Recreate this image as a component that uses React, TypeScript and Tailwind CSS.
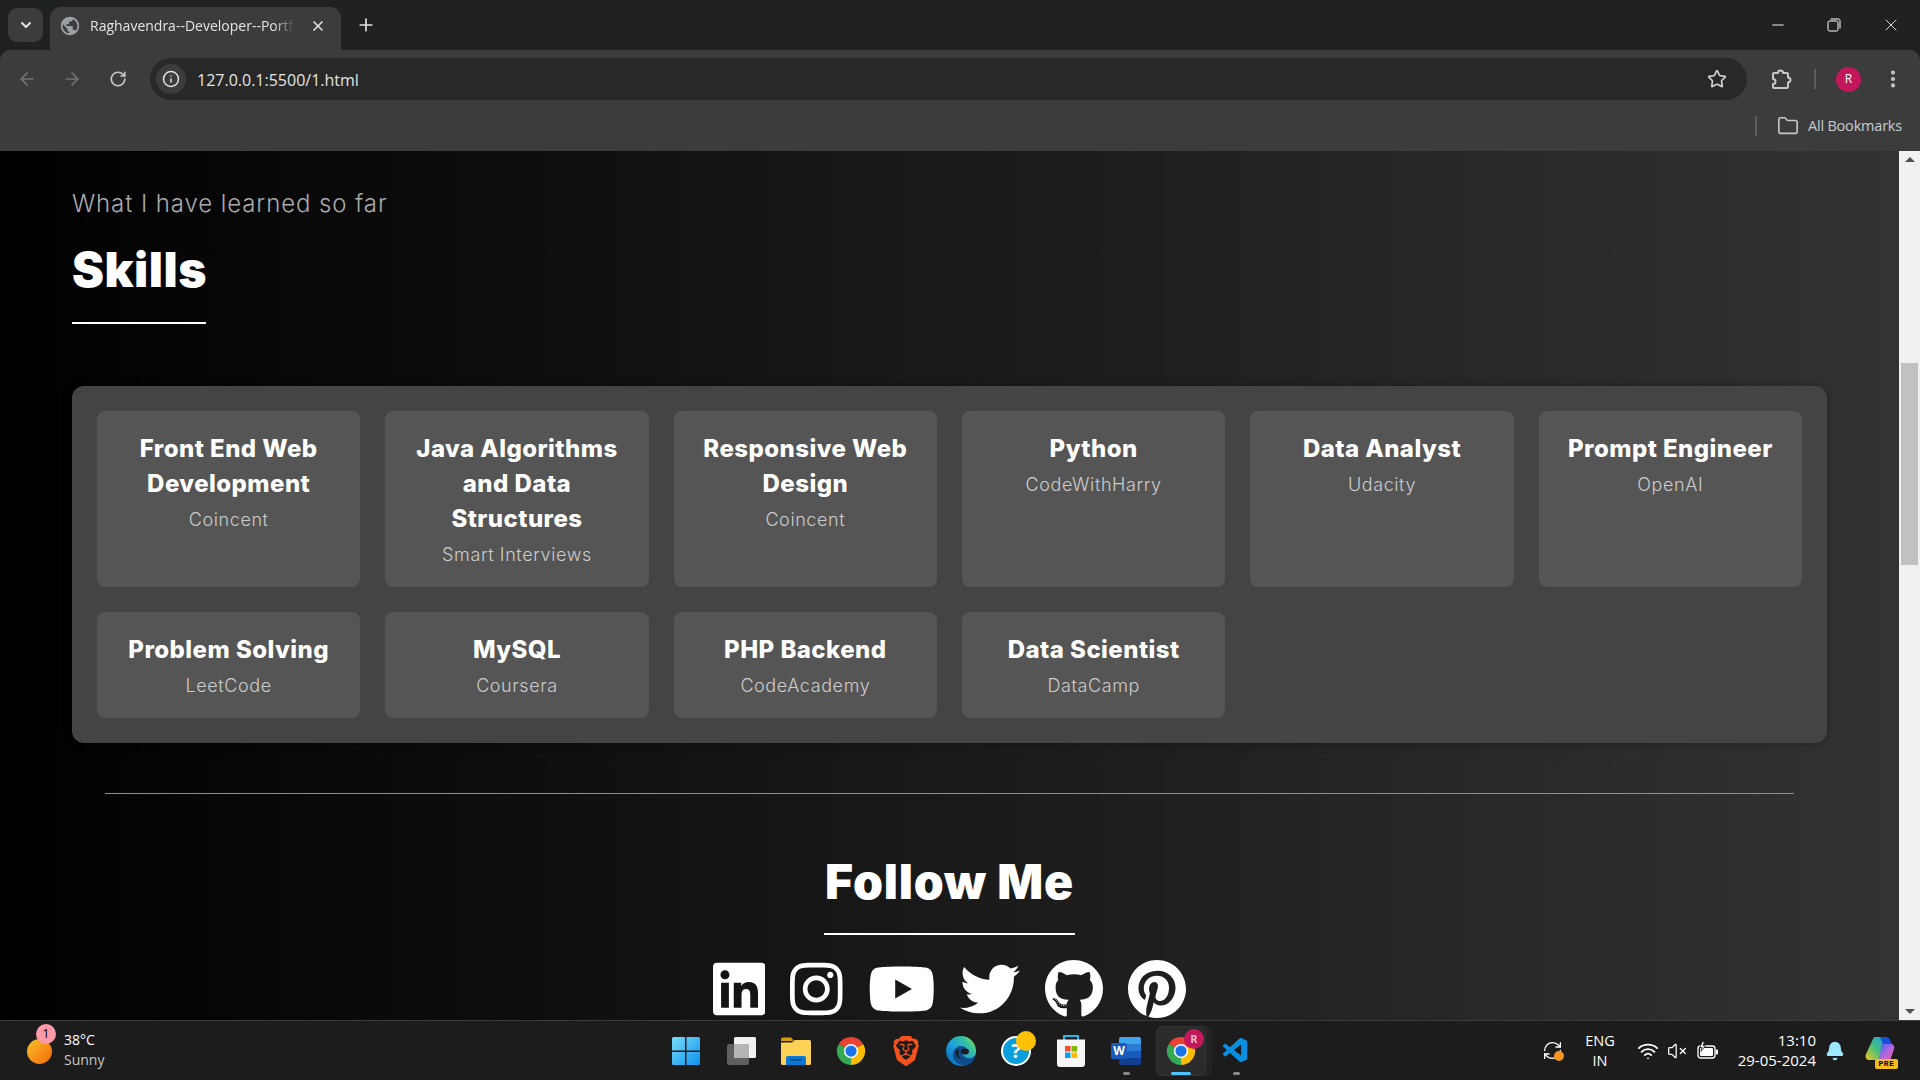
import React from "react";
import { ArrowLeft, ArrowRight, RotateCw, Info, Star, Folder, EllipsisVertical, X, Plus, Minus, ChevronDown, Wifi, VolumeX, Bell, RefreshCw } from "lucide-react";
import { MdPublic } from "react-icons/md";
import { FaLinkedin, FaInstagram, FaYoutube, FaTwitter, FaGithub, FaPinterest } from "react-icons/fa";
import { SiBrave } from "react-icons/si";
import { VscVscode } from "react-icons/vsc";

const skills = [
  { t: "Front End Web Development", s: "Coincent" },
  { t: "Java Algorithms and Data Structures", s: "Smart Interviews" },
  { t: "Responsive Web Design", s: "Coincent" },
  { t: "Python", s: "CodeWithHarry" },
  { t: "Data Analyst", s: "Udacity" },
  { t: "Prompt Engineer", s: "OpenAI" },
  { t: "Problem Solving", s: "LeetCode" },
  { t: "MySQL", s: "Coursera" },
  { t: "PHP Backend", s: "CodeAcademy" },
  { t: "Data Scientist", s: "DataCamp" },
];

function Chrome({ size = 30 }: { size?: number }) {
  return (
    <svg width={size} height={size} viewBox="0 0 32 32">
      <path d="M16 16 L3 8.5 A15 15 0 0 1 29 8.5 Z" fill="#ea4335" />
      <path d="M16 16 L29 8.5 A15 15 0 0 1 16 31 Z" fill="#fbbc04" />
      <path d="M16 16 L16 31 A15 15 0 0 1 3 8.5 Z" fill="#34a853" />
      <circle cx="16" cy="16" r="7.6" fill="#fff" />
      <circle cx="16" cy="16" r="6" fill="#1a73e8" />
    </svg>
  );
}

function WinLogo() {
  return (
    <svg width="30" height="30" viewBox="0 0 30 30">
      <defs>
        <linearGradient id="wg" x1="0" y1="0" x2="1" y2="1">
          <stop offset="0" stopColor="#7adcf8" />
          <stop offset="1" stopColor="#0a92f0" />
        </linearGradient>
      </defs>
      <path d="M1 2.5a1.5 1.5 0 0 1 1.5-1.5H14v13.5H1zM15.5 1H27.5A1.5 1.5 0 0 1 29 2.5V14.500H15.500zM1 16H14v13H2.500A1.500 1.500 0 0 1 1 27.500zM15.500 16H29V27.500A1.500 1.500 0 0 1 27.500 29H15.500z" fill="url(#wg)" />
    </svg>
  );
}

function TaskView() {
  return (
    <svg width="30" height="30" viewBox="0 0 30 30">
      <rect x="1" y="8" width="22" height="21" rx="2" fill="#5f5f5f" />
      <rect x="8" y="1" width="22" height="21" rx="1.500" fill="#f2f2f2" />
      <rect x="8" y="8" width="15" height="14" fill="#b5b5b5" />
    </svg>
  );
}

function Explorer() {
  return (
    <svg width="30" height="28" viewBox="0 0 30 28">
      <path d="M0 2a1.500 1.500 0 0 1 1.500-1.500H10l3 3.500H0z" fill="#d69c0a" />
      <path d="M0 5.500h11l3-2.500H28.500A1.500 1.500 0 0 1 30 4.500V26.500A1.500 1.500 0 0 1 28.500 28H1.500A1.500 1.500 0 0 1 0 26.500z" fill="#ffd257" />
      <path d="M5 28V21a2 2 0 0 1 2-2H23a2 2 0 0 1 2 2V28z" fill="#0a78d4" />
      <rect x="9" y="22" width="12" height="1.500" fill="#063f7a" />
    </svg>
  );
}

function Edge() {
  return (
    <svg width="30" height="30" viewBox="0 0 30 30">
      <defs>
        <linearGradient id="eg" x1="0" y1="1" x2="1" y2="0.2">
          <stop offset="0" stopColor="#0c59a4" />
          <stop offset="0.45" stopColor="#1b9de2" />
          <stop offset="0.8" stopColor="#35c1a0" />
          <stop offset="1" stopColor="#7fe05c" />
        </linearGradient>
      </defs>
      <circle cx="15" cy="15" r="15" fill="url(#eg)" />
      <path d="M30 17c-1 4-5 6-9 5-3-1-5-3-4.500-6 .5-2 3-3 5-1.500-1-4-7-6-11-3-5 3.500-5 11 0 15 2 2 5 3 8 3 6 0 10-4 11.500-12.500z" fill="#0e4c8e" />
      <path d="M13 14c-1.500 2-1 6 2 9-4-1-6-5-5-8 .5-1.500 2-2 3-1z" fill="#1a1a1a" />
      <ellipse cx="19" cy="15.500" rx="4" ry="3" fill="#1c1c1c" />
    </svg>
  );
}

function Help() {
  return (
    <div className="relative w-[30px] h-[30px] rounded-full bg-[#0a9edc] border-2 border-white flex items-center justify-center">
      <span className="text-white text-[20px] font-bold leading-none [font-family:'Open_Sans',sans-serif]">?</span>
      <span className="absolute -top-[7px] -right-[7px] w-[20px] h-[20px] rounded-full bg-[#ffc107]" />
    </div>
  );
}

function Store() {
  return (
    <svg width="30" height="34" viewBox="0 0 30 34">
      <path d="M8 7V2h14v5" fill="none" stroke="#29b6e8" strokeWidth="2" />
      <path d="M1 5.500h28V30a3 3 0 0 1-3 3H4a3 3 0 0 1-3-3z" fill="#f6f6f6" />
      <rect x="9" y="12" width="5.500" height="5.500" fill="#f25022" />
      <rect x="15.500" y="12" width="5.500" height="5.500" fill="#7fba00" />
      <rect x="9" y="18.500" width="5.500" height="5.500" fill="#00a4ef" />
      <rect x="15.500" y="18.500" width="5.500" height="5.500" fill="#ffb900" />
    </svg>
  );
}

function Word() {
  return (
    <div className="relative w-[30px] h-[28px]">
      <div className="absolute right-0 top-0 w-[22px] h-[28px] rounded-[2px] overflow-hidden flex flex-col">
        <div className="h-[7px] bg-[#41a5ee]" />
        <div className="h-[7px] bg-[#2b7cd3]" />
        <div className="h-[7px] bg-[#185abd]" />
        <div className="h-[7px] bg-[#103f91]" />
      </div>
      <div className="absolute left-0 top-[6px] w-[16px] h-[16px] rounded-[2px] bg-[#185abd] flex items-center justify-center text-white text-[12px] font-bold leading-none [font-family:'Open_Sans',sans-serif]">W</div>
    </div>
  );
}

function Copilot() {
  return (
    <div className="relative w-[30px] h-[30px]">
      <svg width="30" height="26" viewBox="0 0 30 26">
        <defs>
          <linearGradient id="cp1" x1="0" y1="1" x2="1" y2="0">
            <stop offset="0" stopColor="#f5c51d" />
            <stop offset="0.5" stopColor="#3fbf7f" />
            <stop offset="1" stopColor="#1f9bf0" />
          </linearGradient>
          <linearGradient id="cp2" x1="0" y1="0" x2="1" y2="1">
            <stop offset="0" stopColor="#2d6df6" />
            <stop offset="0.5" stopColor="#b066e0" />
            <stop offset="1" stopColor="#f0609a" />
          </linearGradient>
        </defs>
        <path d="M9 1h13l-5 18c-1 3-3 5-6 5H4C1 24 0 21 1 18z" fill="url(#cp1)" />
        <path d="M17 8h9c2 0 4 2 3 5l-3 9c-1 2-2 3-5 3h-8l4-17z" fill="url(#cp2)" />
        <path d="M15 1h6c2 0 3 1 4 3l2 4H18z" fill="#1a4fd8" />
      </svg>
      <span className="absolute -bottom-[3px] right-[-3px] h-[10px] w-[23px] bg-[#f5bd1f] rounded-[2px] text-black text-[8px] font-bold leading-[10px] text-center tracking-[0.5px] [font-family:'Liberation_Mono',monospace]">PRE</span>
    </div>
  );
}

function ExtensionIcon() {
  return (
    <svg width="24" height="24" viewBox="0 0 24 24" fill="none" stroke="#c8c8c8" strokeWidth="2" strokeLinejoin="round">
      <path d="M5 6h4a2.500 2.500 0 0 1 5 0h4a1 1 0 0 1 1 1v3.500a2.500 2.500 0 0 1 0 5V20a1 1 0 0 1-1 1H5a1 1 0 0 1-1-1v-3a2.500 2.500 0 0 0 0-5V7a1 1 0 0 1 1-1z" />
    </svg>
  );
}

function BatteryIcon() {
  return (
    <svg width="22" height="20" viewBox="0 0 22 20">
      <rect x="1" y="5" width="17" height="12" rx="2.500" fill="none" stroke="#fff" strokeWidth="1.300" />
      <rect x="3" y="7" width="13" height="8" rx="1" fill="#fff" />
      <rect x="18.800" y="8.500" width="2.200" height="5" rx="1" fill="#fff" />
      <path d="M5.500 0.500L2.500 6.500H5L3.800 10.500L8.500 4.800H6L7.500 0.500z" fill="#fff" stroke="#1c1c1c" strokeWidth="0.800" />
    </svg>
  );
}

function TaskIcon({ children, mark, active }: { children: React.ReactNode; mark?: "dot" | "bar"; active?: boolean }) {
  return (
    <div className="relative w-[55px] h-[60px] flex items-center justify-center">
      {active && (
        <>
          <div className="absolute left-[6px] top-[5px] w-[52px] h-[50px] rounded-[6px] bg-[#232323]" />
          <div className="absolute left-[2px] top-[5px] w-[50px] h-[50px] rounded-[6px] bg-[#2b2b2b] border border-[#333]" />
        </>
      )}
      <div className="relative">{children}</div>
      {mark === "dot" && <div className="absolute bottom-[6px] left-[24px] w-[7px] h-[3px] rounded-full bg-[#8a8a8a]" />}
      {mark === "bar" && <div className="absolute bottom-[6px] left-[17px] w-[20px] h-[3px] rounded-full bg-[#4cc2ff]" />}
    </div>
  );
}

function SkillCard({ t, s }: { t: string; s: string }) {
  return (
    <div className="bg-[#555] rounded-[8px] pt-[20px] px-[20px] pb-[19px] text-center">
      <h3 className="text-white text-[24px] leading-[35px] font-extrabold tracking-[0.45px]">{t}</h3>
      <p className="mt-[6px] text-[#ccc] text-[18px] leading-[26px] font-light tracking-[0.6px]">{s}</p>
    </div>
  );
}

export default function App() {
  return (
    <div className="w-[1920px] h-[1080px] flex flex-col overflow-hidden bg-black [font-family:'Open_Sans',sans-serif]">
      {/* Tab strip */}
      <div className="h-[50px] shrink-0 bg-[#202222] flex items-end relative">
        <div className="ml-[8px] mb-[8px] w-[35px] h-[34px] rounded-[9px] bg-[#3c3c3c] flex items-center justify-center">
          <ChevronDown size={16} strokeWidth={3} className="text-[#e3e3e3]" />
        </div>
        <div className="ml-[7px] w-[291px] h-[43px] rounded-t-[11px] bg-[#3c3c3c] flex items-center pl-[9px] pr-[12px] pb-[6px]">
          <MdPublic size={22} className="text-[#9aa0a6] shrink-0" />
          <span className="ml-[9px] w-[209px] overflow-hidden whitespace-nowrap text-[14px] text-[#e3e3e3] [mask-image:linear-gradient(to_right,black_88%,transparent_98%)]">Raghavendra--Developer--Portfolio</span>
          <X size={16} strokeWidth={2.5} className="ml-[11px] text-[#e3e3e3] shrink-0" />
        </div>
        <div className="ml-[15px] mb-[15px] w-[20px] h-[20px] flex items-center justify-center">
          <Plus size={20} strokeWidth={2} className="text-[#e3e3e3]" />
        </div>
        <div className="ml-auto flex items-center h-[50px]">
          <div className="w-[55px] flex justify-center"><Minus size={18} strokeWidth={1.25} className="text-white" /></div>
          <div className="w-[57px] flex justify-center">
            <svg width="14" height="14" viewBox="0 0 14 14" fill="none" stroke="#fff" strokeWidth="1">
              <rect x="1" y="3" width="10" height="10" rx="1.500" />
              <path d="M3.500 1H11.500A1.500 1.500 0 0 1 13 2.500V10.500" />
            </svg>
          </div>
          <div className="w-[58px] flex justify-center"><X size={20} strokeWidth={1} className="text-white" /></div>
        </div>
      </div>

      {/* Toolbar */}
      <div className="h-[101px] shrink-0 bg-[#202222]">
        <div className="h-[101px] bg-[#3c3c3c] rounded-t-[10px] flex flex-col">
          <div className="h-[58px] flex items-center">
            <ArrowLeft size={20} className="ml-[17px] text-[#747474]" />
            <ArrowRight size={20} className="ml-[25px] text-[#747474]" />
            <RotateCw size={18} strokeWidth={2.25} className="ml-[27px] text-[#c8c8c8]" />
            <div className="ml-[23px] w-[1597px] h-[42px] rounded-full bg-[#282828] flex items-center pl-[6px] pr-[20px]">
              <div className="w-[30px] h-[30px] rounded-full bg-[#3c3c3c] flex items-center justify-center">
                <Info size={18} strokeWidth={2} className="text-[#e3e3e3]" />
              </div>
              <span className="ml-[11px] mt-[2px] text-[16px] text-[#e3e3e3]">127.0.0.1:5500/1.html</span>
              <Star size={20} strokeWidth={2} className="ml-auto text-[#d0d0d0]" />
            </div>
            <div className="ml-[22px]"><ExtensionIcon /></div>
            <div className="ml-[21px] w-[2px] h-[20px] bg-[#5c5c5c]" />
            <div className="ml-[20px] w-[25px] h-[25px] rounded-full bg-[#c2185b] flex items-center justify-center text-white text-[12px]">R</div>
            <EllipsisVertical size={22} strokeWidth={2.5} className="ml-[21px] text-[#c8c8c8]" />
          </div>
          <div className="flex-1 flex items-center justify-end pr-[18px] pb-[8px]">
            <div className="w-[2px] h-[20px] bg-[#5c5c5c]" />
            <Folder size={22} strokeWidth={1.75} className="ml-[20px] text-[#c8c8c8]" />
            <span className="ml-[9px] text-[14.500px] text-[#c4ccd4] tracking-[-0.2px]">All Bookmarks</span>
          </div>
        </div>
      </div>

      {/* Page area */}
      <div className="h-[869px] shrink-0 flex">
        <main className="flex-1 min-w-0 overflow-hidden bg-[linear-gradient(to_right,#000,#333)] [font-family:Inter,sans-serif]">
          <div className="px-[72px] pt-[35px]">
            <p className="text-[24px] leading-[36px] text-[#aaa] font-light tracking-[0.9px]">What I have learned so far</p>
            <h2 className="mt-[12px] text-[48px] leading-[72px] font-black text-white tracking-[0.5px]">Skills</h2>
            <div className="mt-[16px] w-[134px] h-[2px] bg-white" />
            <div className="mt-[62px] bg-[#444] rounded-[12px] p-[25px] grid grid-cols-6 gap-[25px] shadow-[0_0_10px_rgba(0,0,0,0.3)]">
              {skills.map((c) => (
                <SkillCard key={c.t} t={c.t} s={c.s} />
              ))}
            </div>
            <div className="mt-[50px] mx-[33px] h-px bg-[#8f8f8f]" />
            <div className="flex flex-col items-center">
              <h2 className="mt-[52px] w-[251px] text-center whitespace-nowrap text-[48px] leading-[72px] font-black text-white tracking-[0.8px]">Follow Me</h2>
              <div className="mt-[15px] w-[251px] h-[2px] bg-white" />
              <div className="mt-[24px] flex items-start gap-[25px] text-white">
                <FaLinkedin className="h-[60px] w-[52.5px]" />
                <FaInstagram className="h-[60px] w-[52.5px]" />
                <FaYoutube className="h-[60px] w-[67.5px]" />
                <FaTwitter className="h-[60px] w-[60px]" />
                <FaGithub className="h-[60px] w-[58px]" />
                <FaPinterest className="h-[60px] w-[58px]" />
              </div>
            </div>
          </div>
        </main>
        <div className="w-[21px] shrink-0 bg-[#f1f1f1] flex flex-col items-center">
          <div className="h-[17px] flex items-center justify-center"><div className="w-0 h-0 border-x-[5px] border-x-transparent border-b-[5px] border-b-[#505050]" /></div>
          <div className="mt-[195px] w-[17px] h-[202px] bg-[#c1c1c1]" />
          <div className="mt-auto h-[17px] flex items-center justify-center"><div className="w-0 h-0 border-x-[5px] border-x-transparent border-t-[5px] border-t-[#505050]" /></div>
        </div>
      </div>

      {/* Taskbar */}
      <footer className="h-[60px] shrink-0 bg-[#1c1c1c] border-t border-[#3a3a3a] grid grid-cols-[1fr_auto_1fr] items-center text-white">
        <div className="flex items-center pl-[27px]">
          <div className="relative w-[25px] h-[25px] mt-[2px] rounded-full bg-[linear-gradient(135deg,#f5c02a,#f56a0a)]">
            <span className="absolute top-[-15px] left-[-1px] translate-x-[10px] w-[20px] h-[20px] rounded-full bg-[#ff9aa8] text-black text-[12px] leading-[20px] text-center">1</span>
          </div>
          <div className="ml-[12px] mb-[2px] text-[14px] leading-[20px]">
            <div>38°C</div>
            <div className="text-[#c8c8c8]">Sunny</div>
          </div>
        </div>
        <div className="flex items-center h-[59px] translate-x-[1px]">
          <TaskIcon><WinLogo /></TaskIcon>
          <TaskIcon><TaskView /></TaskIcon>
          <TaskIcon><Explorer /></TaskIcon>
          <TaskIcon><Chrome /></TaskIcon>
          <TaskIcon><SiBrave size={30} className="text-[#f4511e]" /></TaskIcon>
          <TaskIcon><Edge /></TaskIcon>
          <TaskIcon><Help /></TaskIcon>
          <TaskIcon><Store /></TaskIcon>
          <TaskIcon mark="dot"><Word /></TaskIcon>
          <TaskIcon mark="bar" active>
            <Chrome />
            <span className="absolute -top-[7px] -right-[8px] w-[20px] h-[20px] rounded-full bg-[#c2185b] text-[#f3b6cc] text-[11px] leading-[20px] text-center font-bold">R</span>
          </TaskIcon>
          <TaskIcon mark="dot"><VscVscode size={30} className="text-[#0a8fe0]" /></TaskIcon>
        </div>
        <div className="flex items-center justify-end pr-[25px]">
          <div className="relative mr-[17px]">
            <RefreshCw size={21} strokeWidth={1.5} className="text-white" />
            <span className="absolute right-[-1px] bottom-[0px] w-[10px] h-[10px] rounded-full bg-[#f7941d]" />
          </div>
          <div className="w-[40px] text-center text-[14.500px] leading-[20px]">
            <div>ENG</div>
            <div>IN</div>
          </div>
          <Wifi size={22} strokeWidth={2} className="ml-[17px]" />
          <VolumeX size={20} strokeWidth={1.5} className="ml-[8px]" />
          <div className="ml-[10px]"><BatteryIcon /></div>
          <div className="ml-[7px] w-[90px] text-right text-[15px] leading-[20px] mb-[2px]">
            <div>13:10</div>
            <div>29-05-2024</div>
          </div>
          <Bell size={20} className="ml-[9px] text-[#9be8ff]" fill="#9be8ff" />
          <div className="ml-[20px]"><Copilot /></div>
        </div>
      </footer>
    </div>
  );
}
